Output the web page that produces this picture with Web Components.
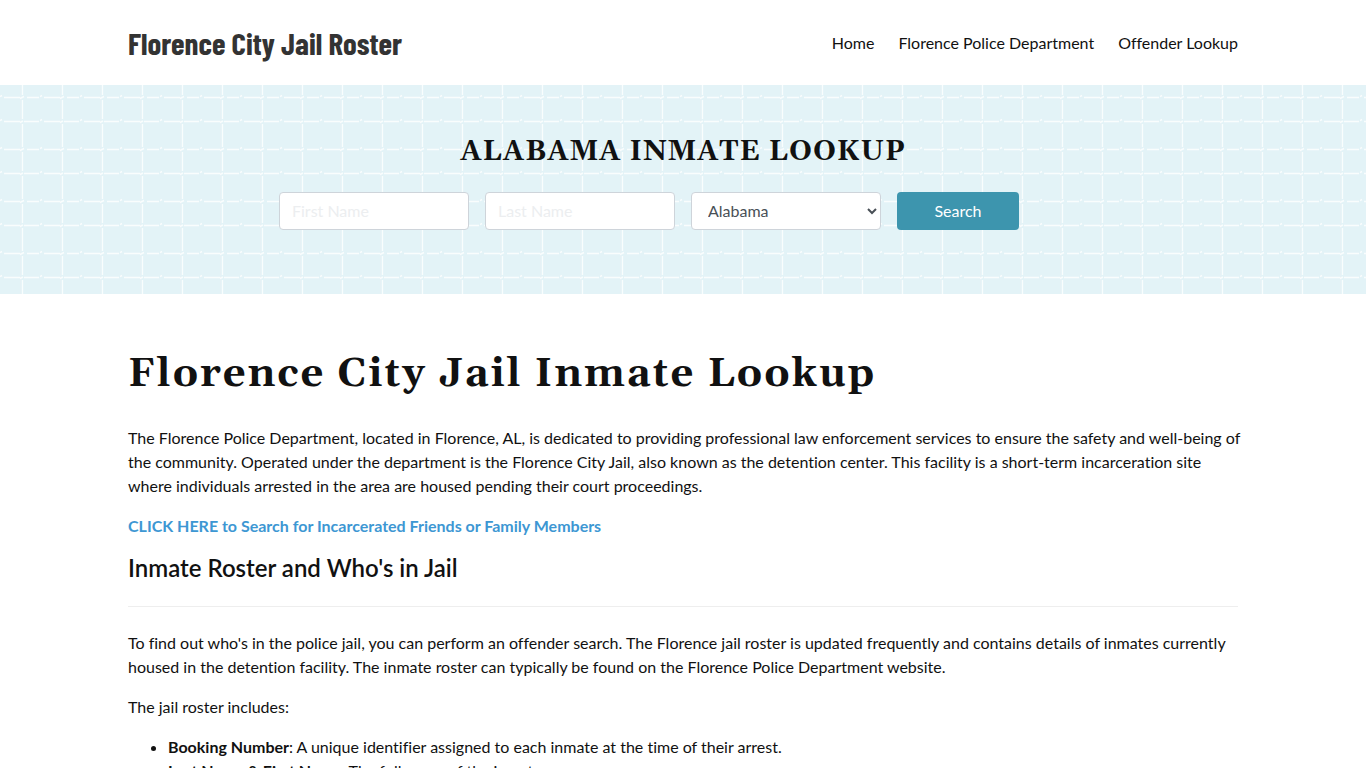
<!DOCTYPE html>
<html lang="en">
<head>
<meta charset="utf-8">
<meta name="viewport" content="width=device-width, initial-scale=1">
<title>Florence City Jail Roster</title>
<style>
  body { margin: 0; background: #fff; color: #111; font: 16px/24px Lato, "Open Sans", sans-serif; font-variant-ligatures: none; }
</style>
</head>
<body>
<site-header>
  <nav-link href="#home">Home</nav-link>
  <nav-link href="#department">Florence Police Department</nav-link>
  <nav-link href="#lookup">Offender Lookup</nav-link>
</site-header>
<inmate-search></inmate-search>
<roster-article>
  <span slot="title">Florence City Jail Inmate Lookup</span>
</roster-article>

<script>
const define = (name, html, setup) => {
  const template = document.createElement('template');
  template.innerHTML = html;
  customElements.define(name, class extends HTMLElement {
    constructor() {
      super();
      this.attachShadow({ mode: 'open' }).append(template.content.cloneNode(true));
    }
    connectedCallback() { if (setup) setup(this); }
  });
};

define('nav-link', `
  <style>
    :host { display: block; }
    a { color: #111; text-decoration: none; }
    a:hover { color: #3d95ae; }
  </style>
  <a><slot></slot></a>`,
  el => { el.shadowRoot.querySelector('a').href = el.getAttribute('href'); });

define('site-header', `
  <style>
    :host { display: block; }
    header { display: flex; align-items: center; justify-content: space-between; gap: 24px;
      max-width: 1110px; margin: 0 auto; padding: 20px 24px; }
    .brand { color: #333; text-decoration: none; white-space: nowrap;
      font: 700 31px/45px "Barlow Condensed", "Roboto Condensed", "Liberation Sans Narrow", Roboto, sans-serif; }
    nav { display: flex; flex-wrap: wrap; gap: 24px; }
  </style>
  <header>
    <a class="brand" href="#home">Florence City Jail Roster</a>
    <nav aria-label="Main"><slot></slot></nav>
  </header>`);

define('inmate-search', `
  <style>
    :host { display: block; position: relative; background: #e3f3f7; }
    .tiles { position: absolute; inset: 0; width: 100%; height: 100%; }
    section { position: relative; max-width: 1110px; margin: 0 auto; padding: 49px 24px 64px; }
    h2 { margin: 0 0 22px; text-align: center; text-transform: uppercase;
      font: 700 28px/36px Gelasio, Georgia, "Liberation Serif", serif; letter-spacing: 1px; }
    form { display: flex; flex-wrap: wrap; gap: 16px; max-width: 808px; margin: 0 auto; }
    label { display: flex; }
    input, select, button { box-sizing: border-box; height: 38px; border-radius: 4px; font: inherit; }
    input, select { width: 190px; border: 1px solid #ced4da; background: #fff; color: #495057; padding: 5px 12px 7px; }
    input::placeholder { color: #eceef0; opacity: 1; }
    button { width: 122px; border: 0; background: #3d95ae; color: #fff; }
  </style>
  <svg class="tiles" aria-hidden="true">
    <defs>
      <pattern id="tile" width="40" height="52" patternUnits="userSpaceOnUse">
        <path d="M20.5 0V52" stroke="#e6f1f5"/>
        <g fill="none" stroke="#fff" opacity=".8">
          <path d="M22.5 0V10M22.5 15V34M22.5 39V52" stroke-width="1.3"/>
          <path d="M4 12.5H20M27 12.5H39M4 36.5H20M24 36.5H39" stroke-width="1.3"/>
          <path d="M0 11.5L2 10.5M20 13.5L24 11.5M0 35.5L2 34.5M20 37.5L23 36" stroke-width="1.4"/>
        </g>
      </pattern>
    </defs>
    <rect width="100%" height="100%" fill="url(#tile)"/>
  </svg>
  <section>
    <h2>Alabama Inmate Lookup</h2>
    <form>
      <label><input type="text" aria-label="First Name" placeholder="First Name"></label>
      <label><input type="text" aria-label="Last Name" placeholder="Last Name"></label>
      <label><select aria-label="State"><option>Alabama</option></select></label>
      <button type="button">Search</button>
    </form>
  </section>`);

define('roster-article', `
  <style>
    :host { display: block; }
    article { max-width: 1110px; margin: 0 auto; padding: 57px 24px 0; }
    h1 { margin: 0 0 27px; font: 700 40px/48px Gelasio, Georgia, "Liberation Serif", serif; letter-spacing: 2px; }
    p { margin: 0 -8px 16px 0; }
    a { color: #3d97d3; font-weight: 700; text-decoration: none; }
    h3 { margin: 0; font-size: 24px; line-height: 28px; font-weight: 600; }
    hr { margin: 24px 0; border: 0; border-top: 1px solid #eee; }
    ul { margin: 0; padding: 0 0 0 40px; }
  </style>
  <article>
    <h1><slot name="title"></slot></h1>
    <p>The Florence Police Department, located in Florence, AL, is dedicated to providing professional law enforcement services to ensure the safety and well-being of the community. Operated under the department is the Florence City Jail, also known as the detention center. This facility is a short-term incarceration site where individuals arrested in the area are housed pending their court proceedings.</p>
    <p><a href="#search">CLICK HERE to Search for Incarcerated Friends or Family Members</a></p>
    <h3>Inmate Roster and Who's in Jail</h3>
    <hr>
    <p>To find out who's in the police jail, you can perform an offender search. The Florence jail roster is updated frequently and contains details of inmates currently housed in the detention facility. The inmate roster can typically be found on the Florence Police Department website.</p>
    <p>The jail roster includes:</p>
    <ul>
      <li><strong>Booking Number</strong>: A unique identifier assigned to each inmate at the time of their arrest.</li>
      <li><strong>Last Name &amp; First Name</strong>: The full name of the inmate.</li>
    </ul>
  </article>`);
</script>
</body>
</html>
